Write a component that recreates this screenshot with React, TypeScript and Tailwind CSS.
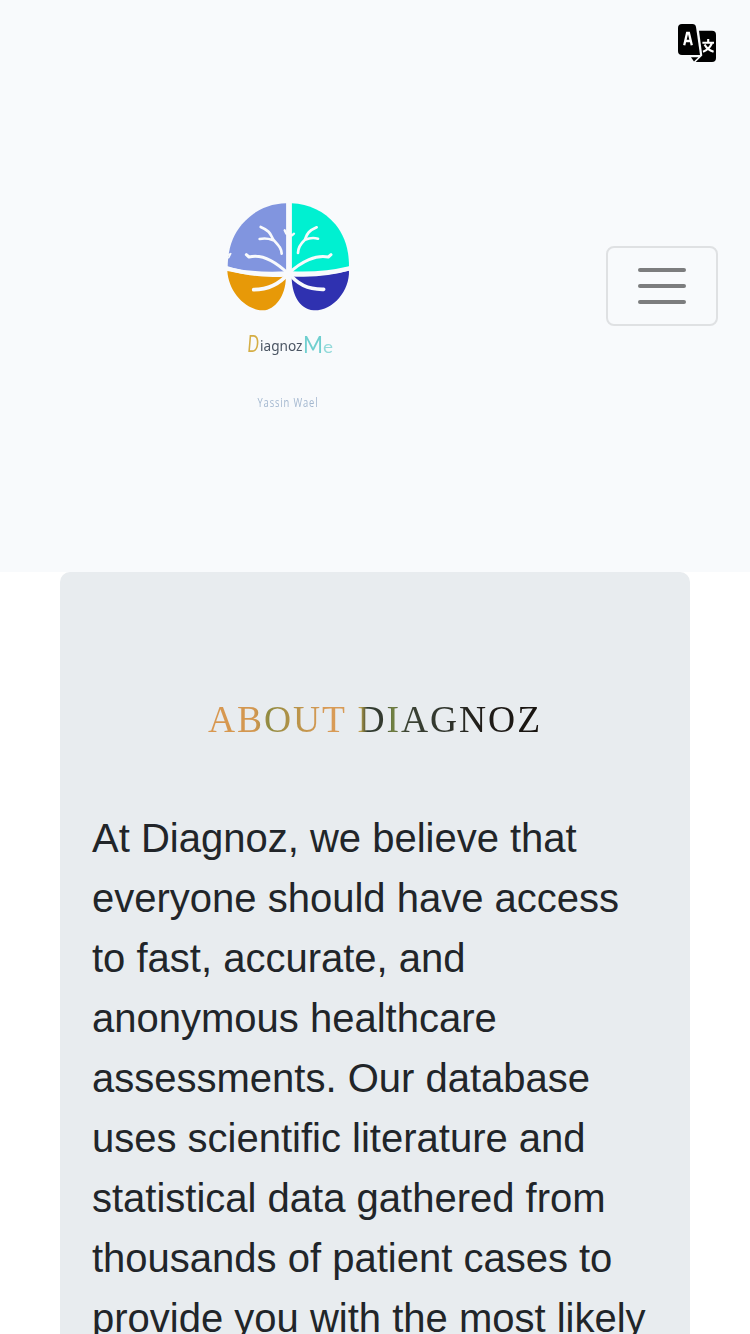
const lines = [
  'At Diagnoz, we believe that',
  'everyone should have access',
  'to fast, accurate, and',
  'anonymous healthcare',
  'assessments. Our database',
  'uses scientific literature and',
  'statistical data gathered from',
  'thousands of patient cases to',
  'provide you with the most likely',
];

function BrainMark() {
  return (
    <svg className="mt-[195px] h-[125px] w-[140px] blur-[0.4px]" viewBox="0 0 420 375" fill="none">
      <path d="M205 25C150 26 105 49 72 88C45 120 30 158 29 216Q105 234 205 229Z" fill="#8195df" />
      <path d="M221 25C273 27 319 49 352 88C379 121 393 162 393 214Q315 233 221 229Z" fill="#00f0d1" />
      <path d="M28 228Q105 247 203 241C207 297 172 347 134 346C78 344 31 286 28 228Z" fill="#e79908" />
      <path d="M221 241Q310 247 393 227C395 287 345 348 287 346C244 344 220 297 221 241Z" fill="#2f31b0" />
      <g stroke="#f8fafc" strokeLinecap="round" strokeLinejoin="round">
        <path d="M213 22V238" strokeWidth="16" strokeLinecap="butt" />
        <path d="M25 218Q115 248 213 238Q316 245 397 220" strokeWidth="11" />
        <path d="M85 179L93 186C129 176 171 198 211 236C251 198 296 178 331 186L339 179" strokeWidth="9" />
        <path d="M107 284C149 284 184 268 213 234C237 268 273 284 317 283" strokeWidth="11" />
        <path d="M128 96C157 108 157 118 166 134C185 155 190 160 191 176M125 132Q145 128 164 135" strokeWidth="8" />
        <path d="M296 97C267 110 268 118 260 135C243 151 240 161 240 174M300 131Q281 126 261 134" strokeWidth="8" />
        <path d="M200 106L205 116L214 119L222 121L228 116" strokeWidth="7" />
        <path d="M28 180L38 176L32 188" strokeWidth="5" />
      </g>
    </svg>
  );
}

function WordMark() {
  return (
    <svg className="mt-[5px] h-[90px] w-[110px] blur-[0.4px]" viewBox="0 0 110 90">
      <text x="12.5" y="27" textLength="11.5" lengthAdjust="spacingAndGlyphs" fill="#d5ae45" className="font-['Lato',sans-serif] text-[24px] italic">D</text>
      <text x="25" y="26.3" textLength="42.5" lengthAdjust="spacingAndGlyphs" fill="#4b5563" className="font-['Noto_Sans',sans-serif] text-[14px]">iagnoz</text>
      <text x="68" y="28" textLength="20" lengthAdjust="spacingAndGlyphs" fill="#6fcfcf" className="font-['Lato',sans-serif] text-[23px]">M</text>
      <text x="88" y="27.5" textLength="10" lengthAdjust="spacingAndGlyphs" fill="#93dada" className="font-['Lato',sans-serif] text-[18px]">e</text>
      <text transform="translate(22.5 82) scale(0.78 1)" textLength="77" fill="#a3b7cf" className="font-['Open_Sans',sans-serif] text-[12px]">Yassin Wael</text>
    </svg>
  );
}

function TranslateIcon() {
  return (
    <svg className="h-[38px] w-[38px]" viewBox="0 0 38 38" fill="none">
      <path d="M4 0H14.5Q17.5 0 18 3L22 31H4Q0 31 0 27V4Q0 0 4 0Z" fill="#000" />
      <path d="M21 6.8H34Q38 6.8 38 11V34Q38 38 34 38H17.7L24.3 31.4Z" fill="#000" />
      <path d="M13 33.2H20.3L16 37.5Z" fill="#000" />
      <path d="M6.2 21.2L9.1 9H10.9L13.8 21.2M7.5 17H12.5" stroke="#fff" strokeWidth="2.3" />
      <path d="M24.4 18.8H36M30.2 15V19M33.8 19.5Q31 25.5 25 27.7M26.6 20.5Q29 25.5 35.6 27.7" stroke="#fff" strokeWidth="2.1" />
    </svg>
  );
}

export default function App() {
  return (
    <div className="h-[1334px] overflow-hidden bg-white font-['Liberation_Sans',sans-serif]">
      <header className="flex h-[572px] justify-between bg-[#f8fafc]">
        <a className="ml-[218px] flex w-[140px] flex-col items-center" aria-label="DiagnozMe">
          <BrainMark />
          <div className="mr-[-4px]"><WordMark /></div>
        </a>
        <div className="flex flex-col items-end pt-6 pr-8">
          <button className="mr-0.5" aria-label="Language"><TranslateIcon /></button>
          <button className="mt-[184px] flex h-20 w-28 flex-col items-center justify-center gap-3 rounded-lg border-2 border-[#dfe1e3]" aria-label="Menu">
            <span className="h-1 w-12 rounded-full bg-[#7c7d7e]" />
            <span className="h-1 w-12 rounded-full bg-[#7c7d7e]" />
            <span className="h-1 w-12 rounded-full bg-[#7c7d7e]" />
          </button>
        </div>
      </header>
      <main className="mx-[60px] h-[1000px] rounded-t-[10px] bg-[#e8ecef] px-8 pt-[124px]">
        <h1 className="ml-[116px] w-[336px] bg-[linear-gradient(90deg,#d99850_0%,#d29750_14%,#8f8b42_18%,#b49348_25%,#d89a55_34%,#d99c57_44%,#b7a04c_45.5%,#303c30_47.5%,#343a30_52%,#738343_55%,#3b4334_59%,#30352d_71%,#201d19_81%,#17130f_100%)] bg-clip-text font-['Liberation_Serif',serif] text-[37.5px] leading-[48px] tracking-[1.95px] whitespace-nowrap text-transparent">
          ABOUT DIAGNOZ
        </h1>
        <p className="mt-16 text-[40px] leading-[60px] whitespace-nowrap text-[#212529]">
          {lines.map((line) => (
            <span key={line} className="block">{line}</span>
          ))}
        </p>
      </main>
    </div>
  );
}
